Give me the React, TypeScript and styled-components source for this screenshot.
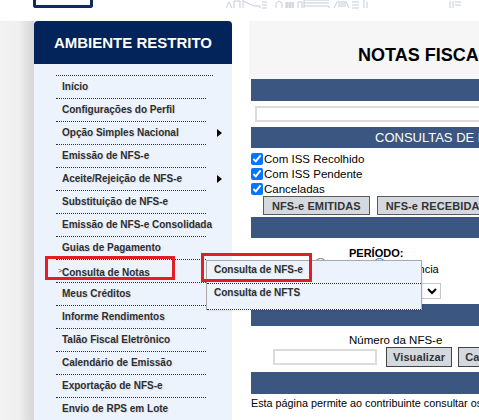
import React from "react";
import styled, { createGlobalStyle } from "styled-components";

const GlobalStyle = createGlobalStyle`
  html, body { margin: 0; padding: 0; background: #fff; overflow: hidden; }
  body { font-family: "Liberation Sans", Arial, sans-serif; width: 479px; height: 420px; }
  * { box-sizing: border-box; }
`;

const Page = styled.div`
  width: 479px;
  height: 420px;
  overflow: hidden;
  display: flex;
  flex-direction: column;
`;

const TopBar = styled.div`
  height: 21px;
  display: flex;
  align-items: flex-start;
  background: #fff;
  flex-shrink: 0;
`;

const LogoBox = styled.div`
  margin-left: 33px;
  width: 60px;
  height: 8px;
  border: 3px solid #0d2d5e;
  border-top: none;
  border-radius: 0 0 3px 3px;
  background: #fff;
`;

const Skyline = styled.svg`
  margin-left: 133px;
  width: 250px;
  height: 9px;
  display: block;
`;

const Main = styled.div`
  flex: 1;
  display: flex;
  align-items: stretch;
  min-height: 0;
`;

const Gutter = styled.div`
  width: 34px;
  flex-shrink: 0;
  background: linear-gradient(to right, #f2f2f2 0%, #efefef 55%, #d6d6d6 100%);
`;

const Sidebar = styled.nav`
  width: 198px;
  flex-shrink: 0;
  background: #edf3fd;
  display: flex;
  flex-direction: column;
`;

const SidebarHeader = styled.div`
  height: 44px;
  background: #03245a;
  border-radius: 4px 4px 0 0;
  color: #fff;
  font-weight: bold;
  font-size: 15px;
  display: flex;
  align-items: center;
  justify-content: center;
  text-shadow: 0 0 1px rgba(0, 0, 0, 0.4);
`;

const Menu = styled.ul`
  list-style: none;
  margin: 0;
  padding: 11px 0 0 22px;
  display: flex;
  flex-direction: column;
`;

const MenuRow = styled.li`
  position: relative;
  display: flex;
  align-items: center;
  height: 23px;
`;

const MenuLabel = styled.div<{ $wide?: boolean }>`
  width: ${(p) => (p.$wide ? 157 : 150)}px;
  height: 23px;
  border-top: 1px dotted #333;
  padding-left: 6px;
  line-height: 22px;
  font-size: 10px;
  font-weight: bold;
  color: #2e2e2e;
  white-space: nowrap;
  text-shadow: 1px 1px 0 rgba(0, 0, 0, 0.1);
`;

const Caret = styled.span`
  display: inline-block;
  width: 0;
  margin-left: -4px;
  margin-right: 4px;
  font-size: 7px;
  font-weight: normal;
  vertical-align: 3px;
  color: #333;
`;

const Arrow = styled.span`
  margin-left: 11px;
  width: 0;
  height: 0;
  border-top: 4px solid transparent;
  border-bottom: 4px solid transparent;
  border-left: 5px solid #000;
`;

const RedBox = styled.div<{ $l: number; $t: number; $w: number; $h: number }>`
  position: absolute;
  left: ${(p) => p.$l}px;
  top: ${(p) => p.$t}px;
  width: ${(p) => p.$w}px;
  height: ${(p) => p.$h}px;
  border: 3px solid #e41d25;
  pointer-events: none;
  z-index: 5;
`;

const Popup = styled.div`
  position: absolute;
  left: 150px;
  top: 1px;
  width: 216px;
  background: #edf3fd;
  border: 1px solid #a9a9a9;
  border-bottom: none;
  z-index: 4;
  box-shadow: 1px 1px 2px rgba(0, 0, 0, 0.08);
`;

const SubItem = styled.div<{ $last?: boolean }>`
  padding: 0 7px ${(p) => (p.$last ? 8 : 5)}px;
  line-height: 17px;
  border-bottom: 1px dotted #333;
  font-size: 10px;
  font-weight: bold;
  color: #2e2e2e;
  white-space: nowrap;
  text-shadow: 1px 1px 0 rgba(0, 0, 0, 0.1);
`;

const Spacer = styled.div`
  width: 17px;
  flex-shrink: 0;
  background: #fff;
`;

const Content = styled.section`
  width: 430px;
  flex-shrink: 0;
  padding-left: 2px;
  background: #fff;
  display: flex;
  flex-direction: column;
  color: #000;
  font-size: 11px;
`;

const Title = styled.h1`
  margin: 0 0 0 -2px;
  height: 58px;
  background: #f6f6f6;
  font-size: 18px;
  font-weight: bold;
  padding: 25px 0 0 109px;
  line-height: 18px;
  white-space: nowrap;
  color: #000;
`;

const Bar = styled.div<{ $h?: number }>`
  height: ${(p) => p.$h ?? 22}px;
  background: #3a5681;
  color: #fff;
  font-size: 13px;
  line-height: ${(p) => p.$h ?? 22}px;
  padding-left: 124px;
  white-space: nowrap;
  flex-shrink: 0;
`;

const InputRow = styled.div`
  height: 26px;
  padding: 5px 0 0 4px;
`;

const TextInput = styled.input<{ $w: number }>`
  width: ${(p) => p.$w}px;
  height: 16px;
  border: 2px solid #dcdcdc;
  background: #fff;
  margin: 0;
  padding: 0;
  outline: none;
  flex-shrink: 0;
`;

const Checks = styled.div`
  padding-top: 3px;
  display: flex;
  flex-direction: column;
`;

const CheckRow = styled.label`
  height: 15px;
  display: flex;
  align-items: center;
  font-size: 11.5px;
  white-space: nowrap;
`;

const CheckBox = styled.input`
  width: 12px;
  height: 12px;
  margin: 0 1px 0 0;
  accent-color: #0075ff;
`;

const ButtonRow = styled.div`
  display: flex;
  gap: 7px;
  padding-left: 12px;
  height: 21px;
`;

const Btn = styled.button`
  height: 19px;
  padding: 0 8px;
  border: 1px solid #5a5a5a;
  border-radius: 0;
  background: #d4d9e0;
  color: #333;
  font-family: "Liberation Sans", Arial, sans-serif;
  font-size: 11px;
  font-weight: bold;
  white-space: nowrap;
  flex-shrink: 0;
  letter-spacing: 0.1px;
`;

const Period = styled.div`
  height: 66px;
  display: flex;
  flex-direction: column;
  padding-top: 9px;
`;

const PeriodLabel = styled.div`
  padding-left: 98px;
  font-weight: bold;
  font-size: 11px;
  line-height: 13px;
`;

const RadioRow = styled.div`
  display: flex;
  align-items: center;
  height: 15px;
  padding-left: 63px;
  margin-top: 1px;
  font-size: 11px;
  white-space: nowrap;
`;

const Radio = styled.input`
  width: 13px;
  height: 13px;
  align-self: flex-start;
  margin: -3px 3px 0 0;
  accent-color: #0075ff;
`;

const RadioLabel = styled.span`
  margin-right: 1px;
`;

const SelectRow = styled.div`
  padding: 7px 0 0 90px;
`;

const Select = styled.select`
  width: 100px;
  height: 16px;
  border: 1px solid #c8c8c8;
  background: #fff;
  font-size: 10px;
  padding: 0;
`;

const NumberSection = styled.div`
  height: 46px;
  display: flex;
  flex-direction: column;
  padding-top: 7px;
`;

const NumberLabel = styled.div`
  padding-left: 98px;
  font-size: 11.5px;
  line-height: 14px;
`;

const NumberRow = styled.div`
  display: flex;
  align-items: center;
  gap: 0;
  padding-left: 22px;
  height: 20px;
`;

const SmallBtn = styled(Btn)<{ $gap: number }>`
  height: 20px;
  padding: 0 6px;
  margin-left: ${(p) => p.$gap}px;
  font-size: 11px;
  border-color: #444;
`;

const Info = styled.p`
  margin: 0;
  padding-top: 3px;
  font-size: 10.8px;
  line-height: 13px;
  white-space: nowrap;
`;

const menuItems: { label: string; arrow?: boolean; wide?: boolean; active?: boolean }[] = [
  { label: "Início", wide: true },
  { label: "Configurações do Perfil" },
  { label: "Opção Simples Nacional", arrow: true },
  { label: "Emissão de NFS-e" },
  { label: "Aceite/Rejeição de NFS-e", arrow: true },
  { label: "Substituição de NFS-e" },
  { label: "Emissão de NFS-e Consolidada" },
  { label: "Guias de Pagamento" },
  { label: "Consulta de Notas", active: true },
  { label: "Meus Créditos" },
  { label: "Informe Rendimentos" },
  { label: "Talão Fiscal Eletrônico" },
  { label: "Calendário de Emissão" },
  { label: "Exportação de NFS-e" },
  { label: "Envio de RPS em Lote" },
];

const SkylineArt = () => (
  <Skyline viewBox="0 0 250 9" fill="none" stroke="#c3cddb" strokeWidth="1">
    <path d="M0 8 L3 2 L6 8 M8 8 V1 H14 V8" />
    <path d="M17 0 V8 M17 1 L28 6 H34 V8 M36 2 H41 M36 5 H41 M36 8 H41" />
    <path d="M50 8 V3 L53 1 L56 3 V8 M59 3 H68 M59 5 H68 M59 7 H68 M61 2 V8 M64 2 V8 M67 2 V8" />
    <path d="M72 8 V2 H76 V8 M78 8 V0 H103 M78 3 H103 M78 6 H103 V8" />
    <path d="M108 8 L111 2 H120 L123 8 M112 4 H120 M112 6 H120 M126 2 H133 M126 5 H133 M126 8 H133 M138 0 V8 M141 2 V8" />
    <path d="M224 8 V1 M227 1 V8 M229 2 H235 M229 5 H235" />
  </Skyline>
);

export default function App() {
  return (
    <>
      <GlobalStyle />
      <Page>
        <TopBar>
          <LogoBox />
          <SkylineArt />
        </TopBar>
        <Main>
          <Gutter />
          <Sidebar>
            <SidebarHeader>AMBIENTE RESTRITO</SidebarHeader>
            <Menu>
              {menuItems.map((item) => (
                <MenuRow key={item.label}>
                  <MenuLabel $wide={item.wide}>
                    {item.active && <Caret>&gt;</Caret>}
                    {item.label}
                  </MenuLabel>
                  {item.arrow && <Arrow />}
                  {item.active && (
                    <>
                      <RedBox $l={-11} $t={-3} $w={130} $h={24} />
                      <Popup>
                        <RedBox $l={-6} $t={-8} $w={111} $h={29} />
                        <SubItem>Consulta de NFS-e</SubItem>
                        <SubItem $last>Consulta de NFTS</SubItem>
                      </Popup>
                    </>
                  )}
                </MenuRow>
              ))}
            </Menu>
          </Sidebar>
          <Spacer />
          <Content>
            <Title>NOTAS FISCAIS ELETRÔNICAS</Title>
            <Bar />
            <InputRow>
              <TextInput $w={400} type="text" />
            </InputRow>
            <Bar $h={21}>CONSULTAS DE NOTAS</Bar>
            <Checks>
              <CheckRow>
                <CheckBox type="checkbox" defaultChecked />
                Com ISS Recolhido
              </CheckRow>
              <CheckRow>
                <CheckBox type="checkbox" defaultChecked />
                Com ISS Pendente
              </CheckRow>
              <CheckRow>
                <CheckBox type="checkbox" defaultChecked />
                Canceladas
              </CheckRow>
            </Checks>
            <ButtonRow>
              <Btn>NFS-e EMITIDAS</Btn>
              <Btn>NFS-e RECEBIDAS</Btn>
            </ButtonRow>
            <Bar $h={21} />
            <Period>
              <PeriodLabel>PERÍODO:</PeriodLabel>
              <RadioRow>
                <Radio type="radio" name="periodo" />
                <RadioLabel>Emissão</RadioLabel>
                <Radio type="radio" name="periodo" defaultChecked />
                <RadioLabel>Incidência</RadioLabel>
              </RadioRow>
              <SelectRow>
                <Select defaultValue="">
                  <option value=""></option>
                </Select>
              </SelectRow>
            </Period>
            <Bar />
            <NumberSection>
              <NumberLabel>Número da NFS-e</NumberLabel>
              <NumberRow>
                <TextInput $w={104} type="text" />
                <SmallBtn $gap={9}>Visualizar</SmallBtn>
                <SmallBtn $gap={6}>Cancelar</SmallBtn>
              </NumberRow>
            </NumberSection>
            <Bar />
            <Info>Esta página permite ao contribuinte consultar os documentos fiscais emitidos.</Info>
          </Content>
        </Main>
      </Page>
    </>
  );
}
